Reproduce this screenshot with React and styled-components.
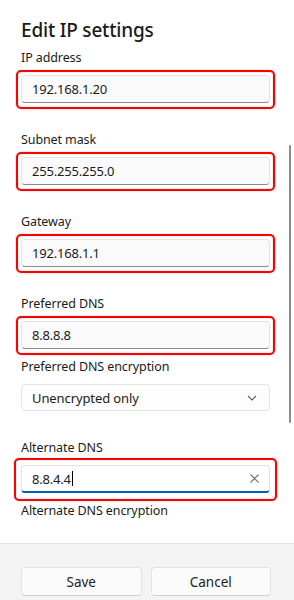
import styled, { createGlobalStyle } from "styled-components";

const GlobalStyle = createGlobalStyle`
  html, body {
    margin: 0;
    padding: 0;
    background: #ffffff;
  }
  body {
    font-family: "Noto Sans", "Open Sans", sans-serif;
    color: #1b1b1b;
  }
`;

const Page = styled.div`
  position: relative;
  width: 294px;
  height: 600px;
  display: flex;
  flex-direction: column;
  overflow: hidden;
  background: #ffffff;
`;

const Body = styled.main`
  flex: 1;
  padding: 16px 24px 0 21px;
  overflow: hidden;
`;

const Title = styled.h1`
  margin: 0 0 5px;
  font-size: 19px;
  line-height: 28px;
  font-weight: 500;
  letter-spacing: -0.2px;
`;

const Group = styled.section`
  display: flex;
  flex-direction: column;
  gap: 9px;
  margin-bottom: 28px;
`;

const Field = styled.div`
  display: flex;
  flex-direction: column;
`;

const Label = styled.label`
  font-size: 12.5px;
  line-height: 18px;
  letter-spacing: -0.1px;
  margin-bottom: 8px;
`;

const Highlight = styled.div`
  position: relative;

  &::after {
    content: "";
    position: absolute;
    top: -${(p) => p.$inset}px;
    left: -${(p) => p.$inset}px;
    right: -${(p) => p.$inset}px;
    bottom: -${(p) => p.$inset + 1}px;
    border: 2px solid #ff0000;
    border-radius: 5px;
    box-shadow: 0 0 2px rgba(0, 0, 0, 0.25), inset 0 0 2px rgba(0, 0, 0, 0.2);
    pointer-events: none;
  }
`;

const TextBox = styled.div`
  box-sizing: border-box;
  height: 28px;
  display: flex;
  align-items: center;
  padding: 0 10px;
  font-size: 13px;
  letter-spacing: -0.2px;
  background: ${(p) => (p.$active ? "#ffffff" : "#fafafa")};
  border: 1px solid #e3e3e3;
  border-bottom: ${(p) => (p.$active ? "2px solid #005fb8" : "1px solid #8a8a8a")};
  border-radius: 4px;
`;

const Value = styled.span`
  flex: 1;
  display: flex;
  align-items: center;
`;

const Caret = styled.span`
  display: inline-block;
  width: 1px;
  height: 15px;
  margin-left: 1px;
  background: #000;
`;

const Select = styled.div`
  box-sizing: border-box;
  height: 27px;
  display: flex;
  align-items: center;
  justify-content: space-between;
  padding: 0 12px 0 10px;
  font-size: 13px;
  letter-spacing: -0.1px;
  background: #fdfdfd;
  border: 1px solid #e5e5e5;
  border-radius: 4px;
`;

const Footer = styled.footer`
  height: 57px;
  box-sizing: border-box;
  display: grid;
  grid-template-columns: 1fr 1fr;
  column-gap: 9px;
  align-items: start;
  padding: 23px 23px 0 21px;
  background: #f3f3f3;
  border-top: 1px solid #e5e5e5;
`;

const Button = styled.button`
  height: 29px;
  font-family: inherit;
  font-size: 13.5px;
  color: #1b1b1b;
  background: #fbfbfb;
  border: 1px solid #e2e2e2;
  border-bottom-color: #d0d0d0;
  border-radius: 4px;
  padding: 0;
`;

const ScrollThumb = styled.div`
  position: absolute;
  left: 289px;
  top: 145px;
  width: 2px;
  height: 278px;
  border-radius: 1px;
  background: #8a8a8a;
`;

function Chevron() {
  return (
    <svg width="10" height="6" viewBox="0 0 10 6">
      <path d="M1 1 L5 5 L9 1" fill="none" stroke="#5c5c5c" strokeWidth="1.1" />
    </svg>
  );
}

function Clear() {
  return (
    <svg width="9" height="9" viewBox="0 0 9 9">
      <path d="M0.5 0.5 L8.5 8.5 M8.5 0.5 L0.5 8.5" fill="none" stroke="#6e6e6e" strokeWidth="1.1" />
    </svg>
  );
}

function InputField({ label, value, active, inset = 5 }) {
  return (
    <Field>
      <Label>{label}</Label>
      <Highlight $inset={inset}>
        <TextBox $active={active}>
          <Value>
            {value}
            {active && <Caret />}
          </Value>
          {active && <Clear />}
        </TextBox>
      </Highlight>
    </Field>
  );
}

export default function App() {
  return (
    <Page>
      <GlobalStyle />
      <Body>
        <Title>Edit IP settings</Title>
        <Group>
          <InputField label="IP address" value="192.168.1.20" />
        </Group>
        <Group>
          <InputField label="Subnet mask" value="255.255.255.0" />
        </Group>
        <Group>
          <InputField label="Gateway" value="192.168.1.1" />
        </Group>
        <Group>
          <InputField label="Preferred DNS" value="8.8.8.8" />
          <Field>
            <Label>Preferred DNS encryption</Label>
            <Select>
              Unencrypted only
              <Chevron />
            </Select>
          </Field>
        </Group>
        <Group>
          <InputField label="Alternate DNS" value="8.8.4.4" active inset={7} />
          <Field>
            <Label>Alternate DNS encryption</Label>
          </Field>
        </Group>
      </Body>
      <Footer>
        <Button>Save</Button>
        <Button>Cancel</Button>
      </Footer>
      <ScrollThumb />
    </Page>
  );
}
